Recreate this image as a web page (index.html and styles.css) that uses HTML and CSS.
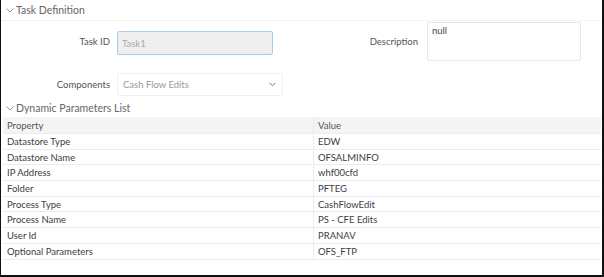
FILE: index.html
```html
<!DOCTYPE html>
<html lang="en">
	<head>
		<meta charset="UTF-8" />
		<title>Task Definition</title>
		<link rel="stylesheet" href="styles.css">
	</head>
	<body>
		<div class="frame">
			<div class="section-head first">
				<svg class="chev" width="8" height="5" viewBox="0 0 8 5"><path d="M0.5 0.5 L4 4 L7.5 0.5" fill="none" stroke="#999" stroke-width="1"/></svg>
				<span>Task Definition</span>
			</div>

			<div class="form-row row-one">
				<label class="field-label">Task ID</label>
				<input class="text-input" type="text" placeholder="Task1" disabled>
				<label class="field-label desc-label">Description</label>
				<div class="textarea">null</div>
			</div>

			<div class="form-row row-two">
				<label class="field-label">Components</label>
				<div class="select">
					<span>Cash Flow Edits</span>
					<svg width="7" height="5" viewBox="0 0 7 5"><path d="M0.5 0.8 L3.5 3.8 L6.5 0.8" fill="none" stroke="#777" stroke-width="1"/></svg>
				</div>
			</div>

			<div class="section-head second">
				<svg class="chev" width="8" height="5" viewBox="0 0 8 5"><path d="M0.5 0.5 L4 4 L7.5 0.5" fill="none" stroke="#999" stroke-width="1"/></svg>
				<span>Dynamic Parameters List</span>
			</div>

			<table class="params">
				<thead>
					<tr><th>Property</th><th>Value</th></tr>
				</thead>
				<tbody>
					<tr><td>Datastore Type</td><td>EDW</td></tr>
					<tr><td>Datastore Name</td><td>OFSALMINFO</td></tr>
					<tr><td>IP Address</td><td>whf00cfd</td></tr>
					<tr><td>Folder</td><td>PFTEG</td></tr>
					<tr><td>Process Type</td><td>CashFlowEdit</td></tr>
					<tr><td>Process Name</td><td>PS - CFE Edits</td></tr>
					<tr><td>User Id</td><td>PRANAV</td></tr>
					<tr><td>Optional Parameters</td><td>OFS_FTP</td></tr>
				</tbody>
			</table>
		</div>
	</body>
</html>
```

FILE: styles.css
```css
body {
	margin: 0;
	background-color: #fff;
	font-family: Lato, "Open Sans", sans-serif;
	font-size: 9.5px;
	color: #3c3c3c;
}

.frame {
	width: 604px;
	height: 277px;
	box-sizing: border-box;
	border-left: 1px solid #111;
	border-right: 2px solid #111;
	border-bottom: 2px solid #111;
	overflow: hidden;
}

.section-head {
	display: flex;
	align-items: center;
	gap: 2px;
	padding-left: 5px;
	font-size: 10.5px;
	color: #666;
}

.section-head.first {
	height: 20px;
	border-bottom: 1px solid #f2f2f2;
}

.section-head.second {
	height: 18px;
	margin-top: 3px;
}

.form-row {
	display: flex;
	align-items: center;
}

.row-one {
	height: 39px;
	margin-top: 1px;
}

.row-two {
	height: 23px;
	margin-top: 12px;
}

.field-label {
	width: 116px;
	box-sizing: border-box;
	padding-right: 7px;
	text-align: right;
	color: #555;
}

.desc-label {
	width: 154px;
	padding-right: 9px;
}

.text-input {
	width: 156px;
	height: 24px;
	box-sizing: border-box;
	margin: 3px 0 0 0;
	padding: 0 4px;
	background-color: #efefef;
	border: 1px solid #a9c9f0;
	border-radius: 2px;
	font-family: inherit;
	font-size: 9.5px;
}

.text-input::placeholder {
	color: #aaa;
}

.textarea {
	width: 154px;
	height: 39px;
	box-sizing: border-box;
	padding: 2px 4px;
	border: 1px solid #e8e8e8;
	border-radius: 2px;
	color: #444;
}

.select {
	width: 166px;
	height: 23px;
	box-sizing: border-box;
	padding: 0 6px 0 5px;
	border: 1px solid #f0f0f0;
	border-radius: 2px;
	display: flex;
	align-items: center;
	justify-content: space-between;
	color: #999;
}

.params {
	width: 598px;
	margin-left: 2px;
	border-collapse: collapse;
	table-layout: fixed;
}

.params th,
.params td {
	height: 14.7px;
	padding: 0 4px;
	text-align: left;
	font-weight: normal;
	border-bottom: 1px solid #ececec;
	white-space: nowrap;
}

.params th:first-child,
.params td:first-child {
	width: 302px;
	border-right: 1px solid #ececec;
}

.params thead th {
	height: 16px;
	background-color: #f3f4f6;
	color: #555;
}
```
